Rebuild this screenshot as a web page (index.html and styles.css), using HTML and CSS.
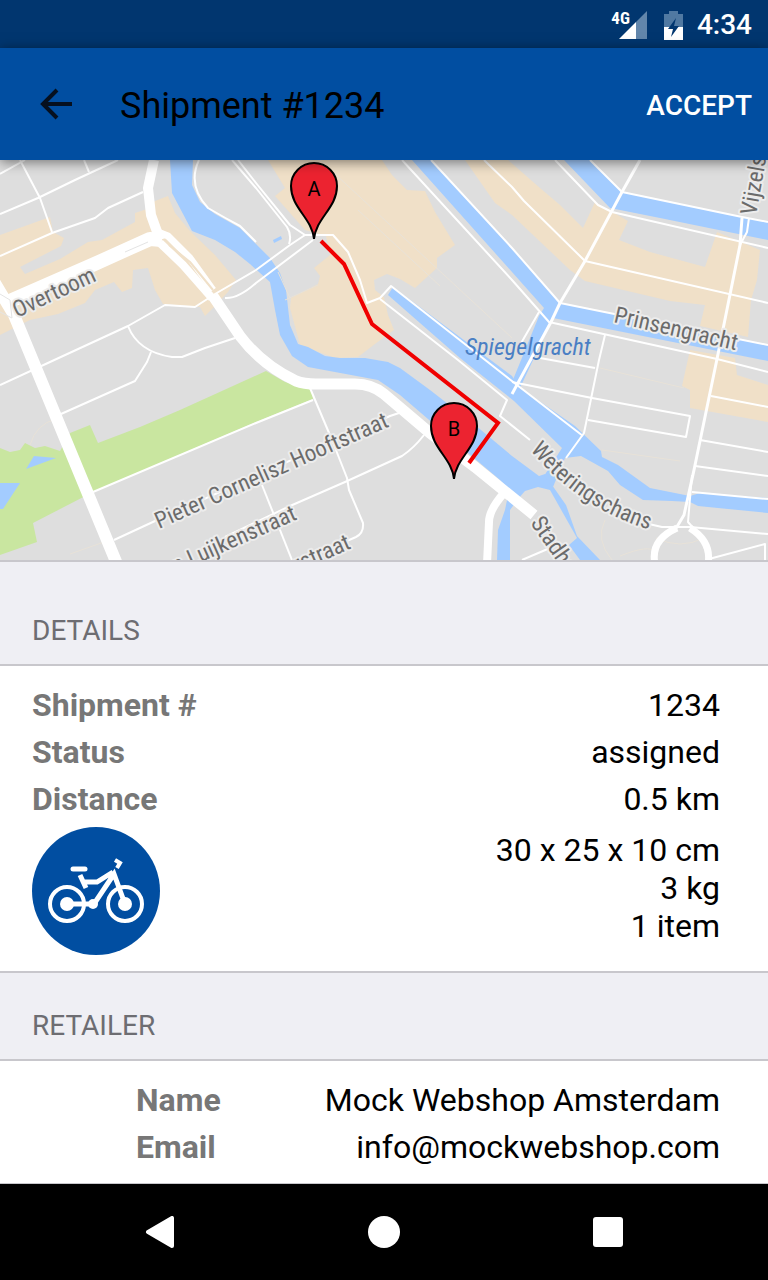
FILE: index.html
```html
<!DOCTYPE html>
<html lang="en">
<head>
    <meta charset="UTF-8">
    <meta name="viewport" content="width=device-width, initial-scale=1.0">
    <title>Shipment #1234</title>
    <link rel="stylesheet" href="styles.css">
</head>
<body>
    <div class="status-bar">
        <div class="signal">
            <span class="network">4G</span>
            <svg class="signal-icon" width="29" height="29" viewBox="0 0 29 29" aria-hidden="true">
                <path d="M17 11 L28 0 V28 H17 Z" fill="#6286ab"/>
                <path d="M0 28 L17 11 V28 Z" fill="#fff"/>
            </svg>
        </div>
        <svg class="battery-icon" width="19" height="29" viewBox="0 0 19 29" aria-hidden="true">
            <path d="M5 0 H14 V3 H19 V16 H0 V3 H5 Z" fill="#5079a2"/>
            <path d="M0 16 H19 V29 H0 Z" fill="#fff"/>
            <path d="M12 7 L4 18 H9 L7 26 L15 15 H10 Z" fill="#01366f"/>
        </svg>
        <span class="clock">4:34</span>
    </div>

    <header class="app-bar">
        <button class="back-btn" aria-label="Back">
            <svg width="32" height="32" viewBox="0 0 32 32" fill="none" stroke="#06101f" stroke-width="4">
                <path d="M32 16 H3 M17 2 L3 16 L17 30"/>
            </svg>
        </button>
        <h1>Shipment #1234</h1>
        <button class="accept-btn">ACCEPT</button>
    </header>

    <main>
        <div class="map">
            <svg viewBox="0 0 768 400" preserveAspectRatio="xMidYMid slice" role="img" aria-label="Route from A to B">
                <rect width="768" height="400" fill="#dedede"/>

                <!-- Shopping areas -->
                <g fill="#f0e0c8">
                    <path d="M0 75 L50 57 L53 72 L64 78 L61 86 L20 107 L25 114 L60 99 L88 82 L102 80 L135 62 L135 53 L147 49 L155 41 L168 36 L175 53 L190 71 L215 95 L236 120 L228 132 L213 148 L205 156 L200 147 L163 144 L155 130 L148 108 L133 110 L132 128 L122 132 L114 122 L95 130 L85 143 L58 154 L30 160 L0 175 Z"/>
                    <path d="M268 0 H382 L392 15 L407 30 L425 31 L435 52 L455 85 L437 98 L437 108 L415 128 L400 119 L387 114 L374 120 L375 130 L384 137 L388 155 L394 170 L375 184 L358 197 L335 198 L300 185 L290 148 L291 138 L318 124 L320 116 L314 108 L330 95 L326 76 L305 70 L275 36 L285 28 Z"/>
                    <path d="M465 0 H508 L540 28 L560 45 L583 68 L595 42 L628 61 L619 80 L650 92 L705 107 L717 72 L760 90 L757 120 L751 140 L748 177 L700 166 L705 145 L670 141 L585 121 L570 110 L512 55 L495 43 Z"/>
                    <path d="M690 190 L735 198 L737 215 L768 225 V262 L690 248 V230 L682 226 Z"/>
                </g>

                <!-- Park -->
                <path fill="#c9e6a0" d="M0 288 L10 292 L20 290 L25 283 L35 288 L45 286 L60 291 L70 273 L90 265 L98 283 L140 267 L180 250 L266 211 L285 222 L311 228 L313 239 L256 262 L95 331 L33 363 L37 382 L0 395 Z"/>

                <!-- Water -->
                <g fill="#a3ccff">
                    <path d="M34 296 L56 298 L26 309 Z"/>
                    <path d="M0 323 H20 L3 349 H0 Z"/>
                    <path d="M273 80 L281 76 L282 79 L274 83 Z"/>
                    <path d="M170 0 H193 L192 25 L200 42 L215 54 L240 68 L256 84 L270 98 L280 113 L286 130 L290 165 L298 184 L308 187 L325 196 L340 198 H365 L388 202 L400 208 L430 230 L475 265 L512 296 L539 316 L545 314 L552 325 L566 345 L577 376 L600 400 H580 L569 385 L577 378 L550 330 L538 327 L525 331 L518 339 L510 350 L510 400 H497 L498 370 L505 350 L509 330 L500 320 L435 265 L400 235 L378 220 L308 207 L292 196 L280 175 L275 150 L270 122 L250 104 L235 92 L215 80 L192 71 L172 33 Z"/>
                    <path d="M393 127 L512 216 L519 227 L575 266 L601 291 L602 297 L618 305 L650 328 L690 336 L700 333 L768 338 V353 L698 346 L690 342 L672 341 L643 340 L620 325 L608 311 L581 296 L565 298 L553 327 L544 316 L562 288 L514 241 L460 198 L388 135 Z"/>
                    <path d="M412 0 H431 L512 88 L560 143 L768 185 V201 L553 158 L518 232 L508 232 L539 156 L544 148 L512 112 Z"/>
                    <path d="M564 0 H590 L622 32 L768 62 V80 L660 58 L610 48 Z"/>
                </g>

                <!-- Faint paths -->
                <g class="road" stroke="#e8e2d8" stroke-width="1">
                    <path d="M320 0 L512 178"/>
                    <path d="M358 50 L440 126"/>
                    <path d="M278 112 L290 138 M285 140 L318 125"/>
                    <path d="M30 285 Q36 264 56 259"/>
                    <path d="M70 394 L104 382"/>
                    <path d="M605 360 Q595 380 612 400 M620 396 Q650 384 655 392"/>
                    <path d="M600 208 L684 228 M602 290 L680 301"/>
                    <path d="M656 378 Q680 390 704 378"/>
                </g>

                <!-- Side streets -->
                <g class="road" stroke="#fff" stroke-width="2">
                    <path d="M0 14 L25 0"/>
                    <path d="M20 0 L40 38 L52 72"/>
                    <path d="M0 54 L38 38 L75 20 L118 0"/>
                    <path d="M84 0 L89 12"/>
                    <path d="M0 96 L52 73 L95 58 L108 48 L143 32"/>
                    <path d="M0 225 L50 202 L128 166 L165 145 L195 147 L215 134 L256 110 L290 85 L305 75"/>
                    <path d="M128 166 Q138 192 172 197 L182 197 L205 188 L235 178"/>
                    <path d="M151 192 L147 202 L135 221 L61 254"/>
                    <path d="M93 332 L256 263 L313 240"/>
                    <path d="M114 380 L155 361 L390 256 L402 252"/>
                    <path d="M310 228 L332 280 L347 318 L349 330 L363 363 Q364 373 356 377 L340 384"/>
                    <path d="M225 377 L290 346 L345 322 L402 296 Q414 288 424 275"/>
                    <path d="M262 325 L292 400"/>
                    <path d="M199 0 Q187 25 208 48 Q225 58 240 66 L256 82"/>
                    <path d="M232 0 L256 28 L287 67 Q292 75 289 84"/>
                    <path d="M238 0 L256 23 L290 65 L305 75 H333 L348 92 L360 120 L367 143 L380 138 L391 126 L517 225 L583 276"/>
                    <path d="M225 138 Q238 139 256 123 L313 80"/>
                    <path d="M380 139 L458 200 L507 240 L500 256 L530 280"/>
                    <path d="M402 0 L512 120 L549 162 L717 199 L768 212"/>
                    <path d="M431 0 L512 88 L560 143 L768 185"/>
                    <path d="M484 0 L512 27 L524 41 L585 101 L768 143"/>
                    <path d="M555 0 L598 45 L612 52 L768 88"/>
                    <path d="M590 0 L622 32 L742 57 L768 62"/>
                    <path d="M539 152 L520 185"/>
                    <path d="M605 175 L599 200 L584 273 L566 298"/>
                    <path d="M749 58 L747 72 L740 85"/>
                    <path d="M692 315 L688 362 L695 370"/>
                    <path d="M512 222 L592 238 L690 256 L686 277 L588 260"/>
                    <path d="M540 198 L595 208"/>
                    <path d="M711 236 L768 247"/>
                    <path d="M700 280 L768 292"/>
                    <path d="M695 306 L768 316"/>
                    <path d="M692 332 L768 339"/>
                    <path d="M640 362 L662 367 L690 367 L768 374"/>
                    <path d="M709 399 L765 384 V400"/>
                    <path d="M522 400 L550 388"/>
                </g>
                <g class="road" stroke="#fff" stroke-width="3">
                    <path d="M640 0 L622 32 L585 101 L560 143 L551 162 L512 234"/>
                    <path d="M742 58 L740 85 L717 199 L694 310 L684 355 L675 370"/>
                </g>

                <!-- Main roads -->
                <g class="road" stroke="#fff">
                    <path stroke-width="10" d="M154 0 L148 28 L151 55 L160 80"/>
                    <path stroke-width="14" d="M10 141 L90 106 L150 79 L162 80"/>
                    <path stroke-width="12" d="M-8 118 L14 155 L117 404"/>
                    <path stroke-width="7" d="M158 72 L168 76 L190 98 L213 130"/>
                    <path stroke-width="8" d="M160 83 L183 105 L212 138"/>
                    <path stroke-width="11" d="M213 136 L240 176 Q262 205 296 221 Q304 224 316 224 H355 Q372 224 384 234 L430 273 L475 307 L534 355"/>
                    <path stroke-width="8" d="M504 333 Q489 350 489 362 L487 404"/>
                    <path stroke-width="7" d="M677 368 Q650 380 655 404 M690 368 Q712 382 708 404"/>
                </g>
                <path class="road" stroke="#e4e4e4" stroke-width="1" d="M0 134 L10 140 L12 158 L0 152 M125 92 L148 82"/>
                <path class="road" stroke="#f0e0c8" stroke-width="2" d="M169 85 L190 102 L213 130"/>

                <g class="street">
                    <text transform="translate(17 158) rotate(-25)">Overtoom</text>
                    <text transform="translate(159 369) rotate(-24)">Pieter Cornelisz Hooftstraat</text>
                    <text transform="translate(298 359) rotate(-24)" text-anchor="end">n Luijkenstraat</text>
                    <text transform="translate(352 388) rotate(-24)" text-anchor="end">rstraat</text>
                    <text transform="translate(613 162) rotate(13)">Prinsengracht</text>
                    <text transform="translate(756 56) rotate(-80)">Vijzels</text>
                    <text transform="translate(530 363) rotate(55)">Stadho</text>
                    <path id="schans" fill="none" stroke="none" d="M530 290 Q584 354 662 373"/>
                    <text><textPath href="#schans">Weteringschans</textPath></text>
                    <text class="canal" x="465" y="195">Spiegelgracht</text>
                </g>

                <path fill="none" stroke="#f00000" stroke-width="4" d="M321 81 L344 104 L372 164 L498 263 L469 303"/>

                <g class="marker">
                    <path d="M314 79 C312 58 291 48 291 26 A23 23 0 0 1 337 26 C337 48 316 58 314 79 Z"/>
                    <text x="314" y="36">A</text>
                    <path d="M454 319 C452 298 431 288 431 266 A23 23 0 0 1 477 266 C477 288 456 298 454 319 Z"/>
                    <text x="454" y="276">B</text>
                </g>
            </svg>
        </div>

        <section class="details">
            <h2>DETAILS</h2>
            <div class="card">
                <dl>
                    <div class="row"><dt>Shipment #</dt><dd>1234</dd></div>
                    <div class="row"><dt>Status</dt><dd>assigned</dd></div>
                    <div class="row"><dt>Distance</dt><dd>0.5 km</dd></div>
                </dl>
                <div class="package">
                    <svg class="bike" viewBox="0 0 128 128" role="img" aria-label="Bike">
                        <circle cx="64" cy="64" r="64" fill="#014ea1"/>
                        <g fill="none" stroke="#fff" stroke-width="4">
                            <circle cx="35" cy="77" r="17"/>
                            <circle cx="93" cy="77" r="17"/>
                            <path d="M35 77 H62 L82 47 L93 77 M52 55 H65 L81 45 M48 48 L54 61" stroke-width="5"/>
                            <path d="M41 42 H53" stroke-width="5" stroke-linecap="round"/>
                            <path d="M83 33 L88 36 L85 41"/>
                        </g>
                        <g fill="#fff">
                            <circle cx="35" cy="77" r="7"/>
                            <circle cx="93" cy="77" r="7"/>
                            <circle cx="61" cy="77" r="5"/>
                        </g>
                    </svg>
                    <ul>
                        <li>30 x 25 x 10 cm</li>
                        <li>3 kg</li>
                        <li>1 item</li>
                    </ul>
                </div>
            </div>
        </section>

        <section class="retailer">
            <h2>RETAILER</h2>
            <div class="card">
                <dl>
                    <div class="row"><dt>Name</dt><dd>Mock Webshop Amsterdam</dd></div>
                    <div class="row"><dt>Email</dt><dd>info@mockwebshop.com</dd></div>
                </dl>
            </div>
        </section>
    </main>

    <nav class="nav-bar">
        <button aria-label="Back">
            <svg width="32" height="32" viewBox="0 0 32 32"><path d="M4 16 L28 2 V30 Z" fill="#fff" stroke="#fff" stroke-width="4" stroke-linejoin="round"/></svg>
        </button>
        <button aria-label="Home">
            <svg width="32" height="32" viewBox="0 0 32 32"><circle cx="16" cy="16" r="16" fill="#fff"/></svg>
        </button>
        <button aria-label="Recent apps">
            <svg width="32" height="32" viewBox="0 0 32 32"><rect x="1" y="1" width="30" height="30" rx="3" fill="#fff"/></svg>
        </button>
    </nav>
</body>
</html>
```
FILE: styles.css
```css
* {
    box-sizing: border-box;
}
body {
    font-family: Roboto, "Liberation Sans", sans-serif;
    margin: 0;
    height: 100vh;
    display: flex;
    flex-direction: column;
    background-color: #efeff4;
    color: #000;
}
button {
    font-family: inherit;
    border: none;
    padding: 0;
    background: none;
    color: white;
    cursor: pointer;
}
svg {
    display: block;
}
h1, h2, dl, dd, ul {
    margin: 0;
    padding: 0;
}

/* Top bars */
.status-bar {
    flex: none;
    height: 48px;
    display: flex;
    justify-content: flex-end;
    align-items: center;
    gap: 14px;
    padding: 2px 16px 0;
    background-color: #01366f;
    color: white;
}
.signal {
    position: relative;
    margin-right: 2px;
}
.network {
    position: absolute;
    top: 0;
    right: 18px;
    font-family: "Roboto Condensed", Roboto, sans-serif;
    font-size: 17px;
    line-height: 14px;
    font-weight: 700;
}
.clock {
    font-size: 28px;
    font-weight: 500;
    line-height: 32px;
}
.app-bar {
    flex: none;
    height: 112px;
    display: flex;
    align-items: center;
    padding: 0 16px 0 40px;
    background-color: #014ea1;
    box-shadow: 0 2px 12px rgba(0, 0, 0, 0.5);
    z-index: 1;
}
.app-bar h1 {
    flex: 1;
    margin-left: 48px;
    padding-top: 4px;
    font-size: 36px;
    font-weight: 400;
}
.accept-btn {
    padding-top: 2px;
    font-size: 28px;
    font-weight: 500;
}

main {
    flex: 1;
    min-height: 0;
    overflow: hidden;
}

/* Map */
.map {
    border-bottom: 2px solid #c8c7cc;
}
.map svg {
    width: 100%;
    height: 400px;
}
.road {
    fill: none;
    stroke-linejoin: round;
}
.street {
    font-family: "Roboto Condensed", Roboto, sans-serif;
    font-size: 23px;
    fill: #6b6b6b;
    stroke: #ececec;
    stroke-width: 4px;
    stroke-linejoin: round;
    paint-order: stroke;
}
.canal {
    font-size: 24px;
    font-style: italic;
    fill: #4a7fc4;
    stroke: none;
}
.marker path {
    fill: #ec2330;
    stroke: #000;
    stroke-width: 2px;
}
.marker text {
    font-size: 20px;
    text-anchor: middle;
}

/* Sections */
.details {
    padding-top: 16px;
}
h2 {
    padding: 35px 32px 15px;
    font-size: 28px;
    font-weight: 400;
    line-height: 36px;
    color: #6d6d72;
}
.card {
    padding: 16px 48px 16px 32px;
    background-color: white;
    border-top: 2px solid #c8c7cc;
    border-bottom: 2px solid #c8c7cc;
    font-size: 32px;
}
.retailer .card {
    padding-left: 136px;
    padding-bottom: 12px;
}
.row {
    display: flex;
    justify-content: space-between;
    line-height: 47px;
}
dt {
    font-weight: 700;
    color: #777;
}
.package {
    display: flex;
    justify-content: space-between;
    margin-top: 4px;
}
.bike {
    width: 128px;
    height: 128px;
}
.package ul {
    padding-top: 4px;
    list-style: none;
    text-align: right;
    line-height: 38px;
}

/* Android buttons */
.nav-bar {
    flex: none;
    height: 96px;
    display: flex;
    justify-content: center;
    background-color: black;
}
.nav-bar button {
    flex: 0 1 224px;
    display: flex;
    justify-content: center;
    align-items: center;
}
```
